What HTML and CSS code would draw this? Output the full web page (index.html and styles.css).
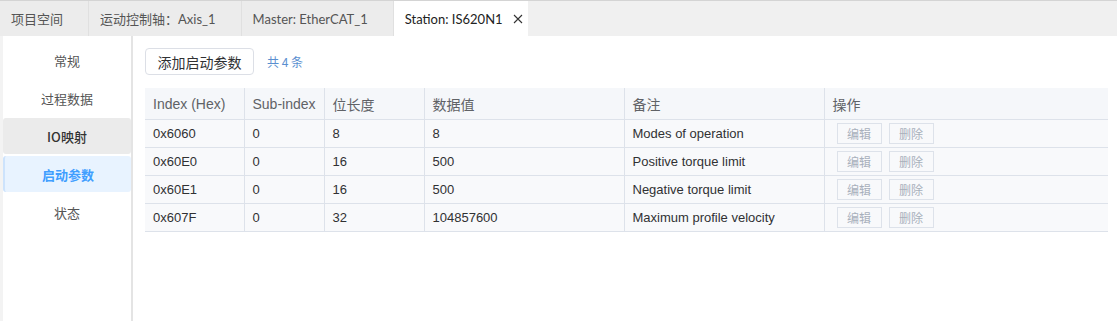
FILE: index.html
```html
<!DOCTYPE html>
<html lang="zh-CN">
<head>
    <meta charset="UTF-8">
    <title>Station: IS620N1</title>
    <link rel="stylesheet" href="styles.css">
</head>
<body>

<div class="tabs">
    <div class="tab"><span>项目空间</span><span class="close"></span></div>
    <div class="tab"><span>运动控制轴：Axis_1</span><span class="close"></span></div>
    <div class="tab"><span>Master: EtherCAT_1</span><span class="close"></span></div>
    <div class="tab active"><span>Station: IS620N1</span>
        <span class="close"><svg width="10" height="10" viewBox="0 0 10 10"><path d="M1 1L9 9M9 1L1 9" stroke="#333" stroke-width="1.1" fill="none"/></svg></span>
    </div>
</div>

<div class="main">
    <div class="side">
        <div class="item">常规</div>
        <div class="item">过程数据</div>
        <div class="item hover">IO映射</div>
        <div class="item active">启动参数</div>
        <div class="item">状态</div>
    </div>

    <div class="content">
        <div class="toolbar">
            <button class="btn">添加启动参数</button>
            <span class="count">共 4 条</span>
        </div>

        <table class="grid">
            <colgroup>
                <col style="width:99px">
                <col style="width:80px">
                <col style="width:100px">
                <col style="width:200px">
                <col style="width:200px">
                <col>
            </colgroup>
            <thead>
                <tr>
                    <th>Index (Hex)</th>
                    <th>Sub-index</th>
                    <th>位长度</th>
                    <th>数据值</th>
                    <th>备注</th>
                    <th>操作</th>
                </tr>
            </thead>
            <tbody>
                <tr>
                    <td>0x6060</td><td>0</td><td>8</td><td>8</td><td>Modes of operation</td>
                    <td><span class="op">编辑</span><span class="op">删除</span></td>
                </tr>
                <tr>
                    <td>0x60E0</td><td>0</td><td>16</td><td>500</td><td>Positive torque limit</td>
                    <td><span class="op">编辑</span><span class="op">删除</span></td>
                </tr>
                <tr>
                    <td>0x60E1</td><td>0</td><td>16</td><td>500</td><td>Negative torque limit</td>
                    <td><span class="op">编辑</span><span class="op">删除</span></td>
                </tr>
                <tr>
                    <td>0x607F</td><td>0</td><td>32</td><td>104857600</td><td>Maximum profile velocity</td>
                    <td><span class="op">编辑</span><span class="op">删除</span></td>
                </tr>
            </tbody>
        </table>
    </div>
</div>

</body>
</html>
```

FILE: styles.css
```css
html, body { margin: 0; padding: 0; height: 100%; }
body { font-family: "Liberation Sans", "Noto Sans CJK SC", sans-serif; background: #fff; overflow: hidden; }

.tabs { display: flex; height: 36px; border-top: 1px solid #d4d4d4; background: #f0f0f0; box-sizing: border-box; }
.tab { display: flex; align-items: center; padding: 0 5px 0 11px; gap: 10px; border-right: 1px solid #e0e0e0; font-family: "Lato", "Noto Sans CJK SC", sans-serif; font-size: 13px; color: #555; background: #ececec; }
.tab.active { background: #fff; color: #222; border-right: none; }
.close { width: 10px; height: 10px; display: flex; }

.main { display: flex; height: calc(100% - 36px); background: #f3f3f3; }
.side { width: 129px; margin-left: 3px; padding-top: 6px; display: flex; flex-direction: column; gap: 2px; border-right: 2px solid #e4e4e4; background: #fff; }
.item { height: 36px; display: flex; align-items: center; justify-content: center; font-family: "Noto Sans CJK SC", sans-serif; font-size: 13px; color: #555; border-radius: 3px; }
.item.hover { background: #ebebeb; color: #333; font-weight: 500; }
.item.active { background: #e8f3ff; color: #409eff; font-weight: 700; border-left: 2px solid #cde3fc; }

.content { flex: 1; padding: 12px 9px 0 12px; background: #fff; }
.toolbar { display: flex; align-items: center; gap: 13px; margin-bottom: 13px; }
.btn { height: 27px; width: 109px; padding: 0; border: 1px solid #dcdfe6; border-radius: 4px; background: #fff; font-family: "Noto Sans CJK SC", sans-serif; font-size: 14px; color: #303133; }
.count { font-family: "Noto Sans CJK SC", sans-serif; font-size: 12px; color: #5a8fd0; }

.grid { width: 963px; border-collapse: collapse; table-layout: fixed; font-size: 13px; }
.grid th { height: 31px; background: #f5f7fa; font-weight: normal; font-size: 14px; color: #606266; text-align: left; padding: 0 0 0 8px; white-space: nowrap; overflow: hidden; border-left: 1px solid #dde2ea; border-bottom: 1px solid #dde2ea; }
.grid td { height: 27px; background: #f8f9fb; color: #303133; padding: 0 8px; border-left: 1px solid #dde2ea; border-bottom: 1px solid #dde2ea; }
.grid th:first-child, .grid td:first-child { border-left: none; }
.grid td:last-child { padding-left: 12px; }
.op { display: inline-block; width: 43px; height: 19px; line-height: 19px; text-align: center; margin-right: 7px; border: 1px solid #dde2ea; background: #f8f9fb; font-family: "Noto Sans CJK SC", sans-serif; font-size: 12px; color: #a8b0bc; vertical-align: middle; }
```
